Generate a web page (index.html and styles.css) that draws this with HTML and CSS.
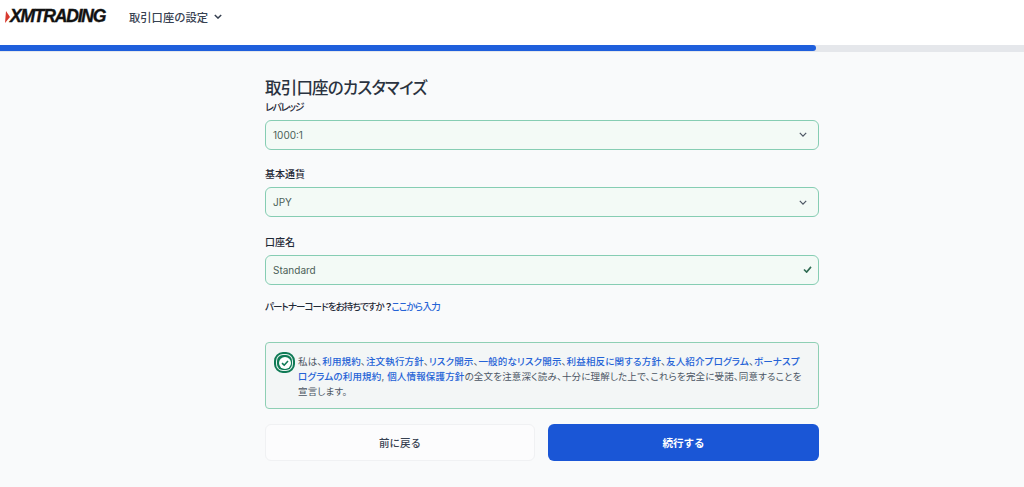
FILE: index.html
```html
<!DOCTYPE html>
<html lang="ja">
<head>
<meta charset="utf-8">
<title>取引口座のカスタマイズ</title>
<link rel="stylesheet" href="styles.css">
</head>
<body>
<header class="topbar">
  <div class="logo">
    <svg class="logo-mark" viewBox="0 0 5 12" width="5" height="12"><path d="M1 0L5 6L0 12Z" fill="#d8392f"/></svg>
    <span class="logo-text">XMTRADING</span>
  </div>
  <div class="nav-item">
    <span>取引口座の設定</span>
    <svg class="nav-chev" viewBox="0 0 10 6" width="8" height="5"><path d="M1 1L5 5L9 1" fill="none" stroke="#374151" stroke-width="1.8"/></svg>
  </div>
</header>
<div class="progress"><div class="progress-fill"></div></div>
<main class="page">
  <form class="form">
    <h1 class="title">取引口座のカスタマイズ</h1>
    <div class="field">
      <label class="label label-kana">レバレッジ</label>
      <div class="control"><span>1000:1</span>
        <svg class="chev" viewBox="0 0 10 6" width="8" height="5"><path d="M1 1L5 5L9 1" fill="none" stroke="#4b5563" stroke-width="1.5"/></svg>
      </div>
    </div>
    <div class="field">
      <label class="label">基本通貨</label>
      <div class="control"><span>JPY</span>
        <svg class="chev" viewBox="0 0 10 6" width="8" height="5"><path d="M1 1L5 5L9 1" fill="none" stroke="#4b5563" stroke-width="1.5"/></svg>
      </div>
    </div>
    <div class="field">
      <label class="label">口座名</label>
      <div class="control"><span>Standard</span>
        <svg class="tick" viewBox="0 0 10 8" width="9" height="7"><path d="M1 4L4 7L9 1" fill="none" stroke="#2f6b52" stroke-width="1.8"/></svg>
      </div>
    </div>
    <p class="partner">パートナーコードをお持ちですか<span class="qmark">？</span><a class="link">ここから入力</a></p>
    <div class="agree">
      <span class="check">
        <span class="check-inner">
          <svg viewBox="0 0 12 12" width="12" height="12"><circle cx="6" cy="6" r="6" fill="#fff"/><path d="M3 6.2L5.2 8.2L9 4" fill="none" stroke="#0f7a55" stroke-width="1.6"/></svg>
        </span>
      </span>
      <p class="agree-text">私は、<a class="link">利用規約</a>、<a class="link">注文執行方針</a>、<a class="link">リスク開示</a>、<a class="link">一般的なリスク開示</a>、<a class="link">利益相反に関する方針</a>、<a class="link">友人紹介プログラム</a>、<a class="link">ボーナスプログラムの利用規約</a>, <a class="link">個人情報保護方針</a>の全文を注意深く読み、十分に理解した上で、これらを完全に受諾、同意することを宣言します。</p>
    </div>
    <div class="actions">
      <button type="button" class="btn btn-back">前に戻る</button>
      <button type="button" class="btn btn-next">続行する</button>
    </div>
  </form>
</main>
</body>
</html>
```

FILE: styles.css
```css
* { box-sizing: border-box; }
html, body { margin: 0; height: 100%; }
body {
  background: #f9fafb;
  font-family: Inter, "Noto Sans CJK JP", sans-serif;
  color: #1f2937;
  overflow: hidden;
  font-feature-settings: "palt";
}
.topbar {
  height: 45px;
  background: #fff;
  display: flex;
  align-items: flex-start;
  padding: 6px 0 0 5px;
}
.logo { display: flex; align-items: center; width: 124px; height: 21px; }
.logo-text {
  font-family: "Liberation Sans", sans-serif;
  font-weight: 700;
  font-style: italic;
  font-size: 17.5px;
  letter-spacing: -1.2px;
  color: #111;
  -webkit-text-stroke: 0.4px #111;
}
.nav-item {
  display: flex;
  align-items: center;
  gap: 6px;
  height: 21px;
  font-size: 11.3px;
  font-weight: 500;
  color: #374151;
  font-feature-settings: normal;
}
.progress { height: 7px; background: #e5e7eb; }
.progress-fill {
  width: 816px;
  height: 6px;
  background: #1f5fdc;
  border-radius: 0 3px 3px 0;
}
.page { display: flex; justify-content: center; padding-left: 60px; padding-top: 25px; }
.form { width: 554px; display: flex; flex-direction: column; }
.title {
  margin: 0.5px 0 0;
  font-size: 16.5px;
  line-height: 21px;
  font-weight: 500;
  letter-spacing: -0.8px;
  color: #2b3340;
}
.field { display: flex; flex-direction: column; margin-bottom: 16.5px; }
.label {
  font-size: 10px;
  line-height: 14px;
  font-weight: 500;
  color: #1f2937;
  margin: 1px 0 6px;
}
.label-kana { letter-spacing: -1.3px; }
.control {
  height: 30px;
  border: 1px solid #86cdb3;
  border-radius: 6px;
  background: #f3faf6;
  display: flex;
  align-items: center;
  justify-content: space-between;
  padding: 0 11px 0 7px;
  font-size: 10px;
  color: #4b5f58;
}
.tick { margin-right: -5px; }
.partner {
  margin: -1.5px 0 28.5px;
  font-size: 9.5px;
  line-height: 14px;
  font-weight: 500;
  letter-spacing: -0.9px;
  color: #1f2937;
}
.qmark { letter-spacing: 0; font-feature-settings: normal; font-weight: 700; margin-right: -2px; }
.partner .link { letter-spacing: -0.7px; }
.link { color: #2563d6; }
.agree {
  height: 67px;
  border: 1px solid #8ecfb4;
  border-radius: 4px;
  background: #f3f6f6;
  display: flex;
  align-items: flex-start;
  gap: 3px;
  padding: 9px 12px 0 8px;
}
.check {
  flex: none;
  width: 21px;
  height: 21px;
  border: 2px solid #0f7a55;
  border-radius: 9px;
  padding: 1px;
  background: #e6f2ee;
  display: flex;
}
.check-inner {
  flex: 1;
  border-radius: 6px;
  background: #0f7a55;
  display: flex;
  align-items: center;
  justify-content: center;
}
.agree-text {
  margin: 2px 0 0;
  font-size: 9.5px;
  line-height: 15px;
  letter-spacing: 0.17px;
  color: #4b5563;
}
.agree-text .link { font-weight: 500; }
.actions { display: grid; grid-template-columns: 270px 271px; gap: 13px; margin-top: 15px; }
.btn {
  height: 37px;
  border-radius: 6px;
  font-family: inherit;
  font-size: 10.5px;
  font-weight: 500;
  padding: 0;
}
.btn-back { background: #fcfcfd; border: 1px solid #f0f1f3; color: #374151; }
.btn-next { background: #1a56d6; border: 0; color: #fff; font-weight: 600; }
```
